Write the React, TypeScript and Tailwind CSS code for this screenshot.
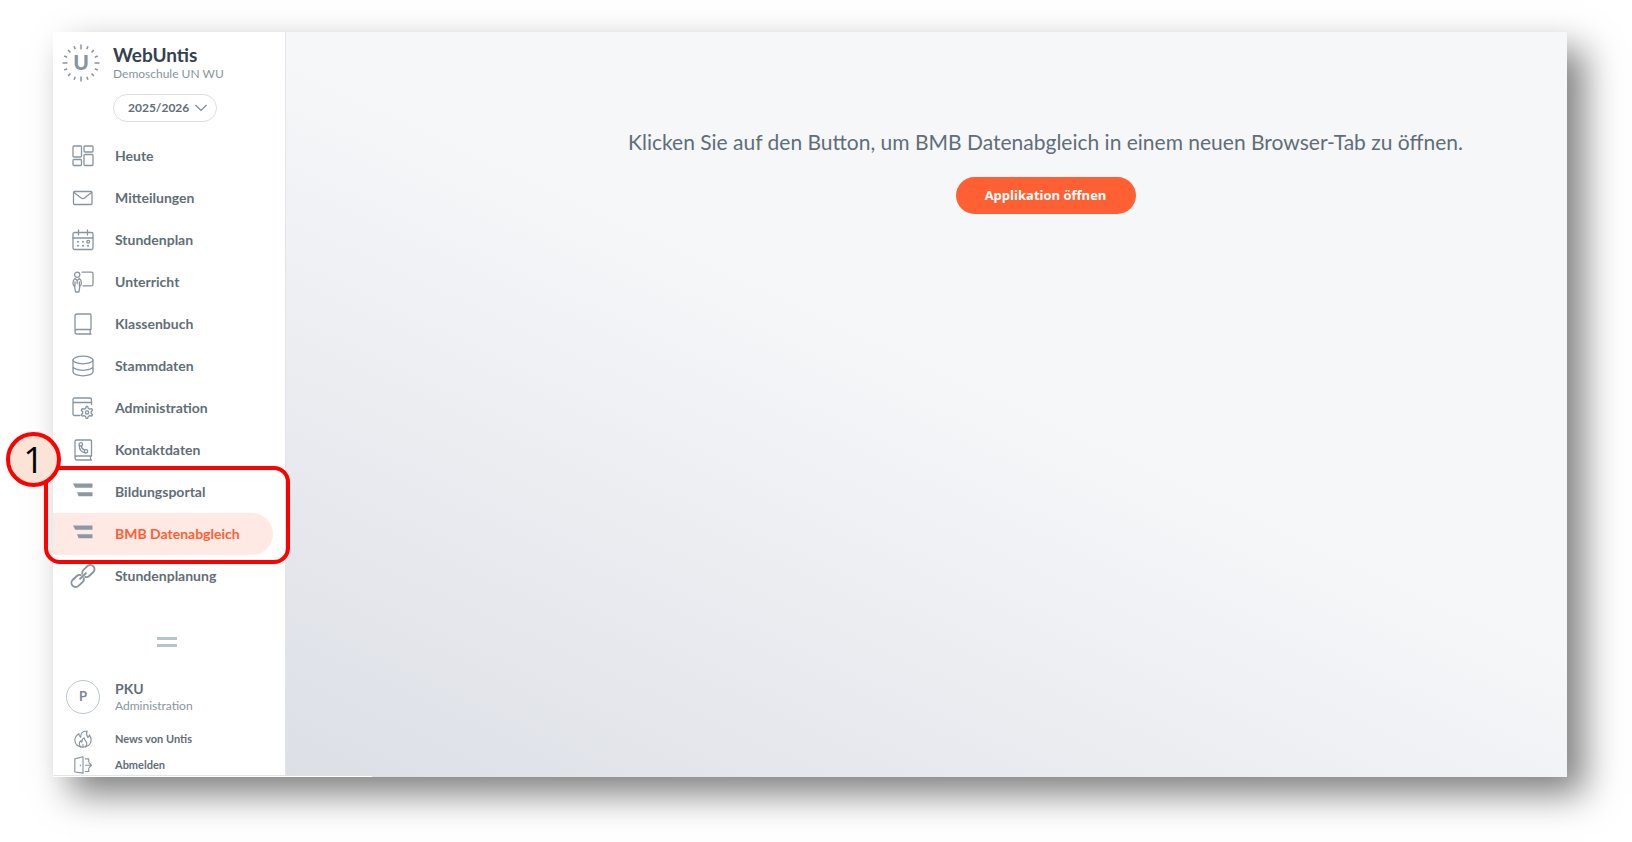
import type { ReactNode } from "react";

interface IconProps {
	children: ReactNode;
	size?: "md" | "sm";
}

function Icon({ children, size = "md" }: IconProps) {
	return (
		<svg
			viewBox="0 0 22 22"
			fill="none"
			stroke="#8795a0"
			strokeWidth={size === "sm" ? 1.4 : 1.3}
			strokeLinecap="round"
			strokeLinejoin="round"
			aria-hidden="true"
			className={`shrink-0 overflow-visible ${size === "sm" ? "size-[18px]" : "size-[22px]"}`}
		>
			{children}
		</svg>
	);
}

const portalIcon = (
	<g fill="#8b99a3" stroke="none">
		<path d="M1 2.500h19.500v4.300H3.200z" />
		<path d="M5 11.300h15.500v4H6.600z" />
	</g>
);

const icons = {
	today: (
		<>
			<rect x="1" y="1" width="8.5" height="11" rx="1" />
			<rect x="12" y="1" width="9" height="6" rx="1" />
			<rect x="1" y="14.5" width="8.5" height="6" rx="1" />
			<rect x="12" y="9.5" width="9" height="11" rx="1" />
		</>
	),
	messages: (
		<>
			<rect x="1.5" y="4.5" width="18.5" height="13" rx="1" />
			<path d="m2 5.500 6.800 5.300q2 1.500 4 0L19.500 5.500" />
		</>
	),
	timetable: (
		<>
			<rect x="1" y="3.500" width="20" height="17" rx="1.500" />
			<path d="M1 9h20M6.500 1v5M15.500 1v5" />
			<path strokeWidth="2" d="M6 12.800h.01M11 12.800h.01M6 16.800h.01M11 16.800h.01M16 16.800h.01" />
			<circle cx="16.200" cy="12.800" r="1.400" />
		</>
	),
	lessons: (
		<>
			<circle cx="5.200" cy="3.700" r="2.600" />
			<path d="M10 1.200h9.500q1.500 0 1.500 1.500v10.600q0 1.500-1.500 1.500H11" />
			<path d="M3 7.500q-2 1.200-2 4.500 0 2.500 1.600 3.500l.9 5.500h3.400l.9-5.500q1.600-1 1.600-3.500 0-3.300-2-4.500M3 7.500l2.200 2 2.200-2M5.200 9.500v3M3 11v4M7.400 11v4" />
		</>
	),
	classbook: (
		<path d="M19 16.500V2q0-1-1-1H5Q3 1 3 3v15.500Q3 21 5 21h14M19 16.500H5q-2 0-2 2M18.200 16.500V21" />
	),
	masterData: (
		<>
			<ellipse cx="11" cy="5" rx="10" ry="3.800" />
			<path d="M1 5v12c0 2.100 4.500 3.800 10 3.800s10-1.700 10-3.800V5M1 11.500c0 2.100 4.500 3.800 10 3.800s10-1.700 10-3.800" />
		</>
	),
	administration: (
		<>
			<path d="M8 18.500H2.500Q1 18.500 1 17V2.500Q1 1 2.500 1h15.500Q19.500 1 19.500 2.500v5M1 5.500h18.500" />
			<path d="m14.300 9.500 1.400 0 .6 1.900 1.300.8 2-.5.9 1.500-1.300 1.500v1.500l1.300 1.500-.9 1.500-2-.5-1.300.7-.6 1.900h-1.600l-.6-1.900-1.300-.7-2 .5-.9-1.500 1.300-1.500v-1.500l-1.300-1.500.9-1.500 2 .5 1.300-.8z" />
			<circle cx="15" cy="15.400" r="1.600" />
		</>
	),
	contacts: (
		<>
			<path d="M19.500 17V2.300Q19.500 1 18.200 1H4.500Q3 1 3 3v15.500Q3 21 5 21h14.500M19.500 17H5q-2 0-2 1.700M18.500 17v4" />
			<circle cx="8.800" cy="5.300" r="1.700" />
			<path d="M7.200 6.500c.2 4 2.500 6.800 6 7.300M9.500 7c0 1.800 1.500 3.500 3.200 3.900" />
			<circle cx="14" cy="12.300" r="1.700" />
		</>
	),
	planning: (
		<g transform="rotate(-43 11 11)" strokeWidth="1.900">
			<path d="M10 8.800A4 4 0 0 0 6.500 6.800H1a4.200 4.200 0 0 0 0 8.400h5.500A4 4 0 0 0 10 13.200" />
			<path d="M12 8.800A4 4 0 0 1 15.500 6.800H21a4.200 4.200 0 0 1 0 8.400h-5.500A4 4 0 0 1 12 13.200" />
			<path d="M7 11h8" />
		</g>
	),
	news: (
		<>
			<path d="M16 1.200C9 1 8 5.500 8.300 9 6.500 8 6 6.500 6 4.500 3 6.500 1 9.500 1 12.500c0 5 4.500 8.500 9.700 8.500 5.800 0 10.300-3.700 10.300-9.200 0-2.300-.8-4-2.300-5.800 0 1.500-.4 2.500-1.700 3.300-1.700-2.500-2.500-5-1-8.100z" />
			<path d="M8 20.500c-2.500-3-1.500-6 .5-7.500 0 1 .5 1.500 1.200 1.900-.3-2.400.8-4.400 2.800-5.400 0 3.500 3.500 4 3.200 7.500-.1 1.600-.8 2.700-1.700 3.500M11 20.500v-3" />
		</>
	),
	logout: (
		<path d="M1 3.500 11 1v20L1 19.500zM14 3.500h4V7M14 19h4v-3.500M14 11.300h7M18.500 8.500l2.800 2.800-2.800 2.800M7.800 11v.8" />
	),
};

const mainItems = [
	{ label: "Heute", icon: icons.today },
	{ label: "Mitteilungen", icon: icons.messages },
	{ label: "Stundenplan", icon: icons.timetable },
	{ label: "Unterricht", icon: icons.lessons },
	{ label: "Klassenbuch", icon: icons.classbook },
	{ label: "Stammdaten", icon: icons.masterData },
	{ label: "Administration", icon: icons.administration },
	{ label: "Kontaktdaten", icon: icons.contacts },
];

interface NavItemProps {
	label: string;
	icon: ReactNode;
	active?: boolean;
}

function NavItem({ label, icon, active = false }: NavItemProps) {
	return (
		<a
			href="#"
			aria-current={active ? "page" : undefined}
			className={`mr-3 flex h-[42px] items-center gap-[21px] rounded-r-full pl-[19px] text-sm font-bold ${
				active ? "bg-[#ffe9e4] text-[#ff6033]" : "text-[#5f6e78]"
			}`}
		>
			<Icon>{icon}</Icon>
			{label}
		</a>
	);
}

function Logo() {
	const rays = Array.from({ length: 16 }, (_, i) => i * 22.5);

	return (
		<svg viewBox="0 0 38 38" className="size-[38px] shrink-0" role="img" aria-label="Untis">
			{rays.map((angle) => (
				<path
					key={angle}
					d={angle % 90 === 0 ? "M19 .5v5" : "M19 .8v3.200"}
					stroke="#8795a0"
					strokeWidth="1.500"
					transform={`rotate(${angle} 19 19)`}
				/>
			))}
			<text x="19" y="26" textAnchor="middle" fontSize="21" fontWeight="900" fill="#8795a0">
				U
			</text>
		</svg>
	);
}

function Sidebar() {
	return (
		<aside className="mb-px flex w-[233px] shrink-0 flex-col border-r border-b border-[#e3e6e9] bg-white">
			<header className="flex items-start gap-[13px] pt-3 pl-[9px]">
				<Logo />
				<div>
					<h1 className="text-[19px] leading-[22px] font-bold text-[#33424d]">WebUntis</h1>
					<p className="text-xs leading-4 text-[#8795a0]">Demoschule UN WU</p>
					<div className="relative mt-3 w-[104px]">
						<select
							aria-label="Schuljahr"
							className="h-7 w-full appearance-none rounded-full border border-[#d9dfe3] bg-white pl-[14px] text-xs font-bold text-[#5f6e78]"
						>
							<option>2025/2026</option>
						</select>
						<svg
							viewBox="0 0 12 8"
							fill="none"
							stroke="#7b8a95"
							strokeWidth="1.200"
							aria-hidden="true"
							className="pointer-events-none absolute top-[10px] right-[10px] h-2 w-3"
						>
							<path d="m.5 1 5.500 5.500L11.500 1" />
						</svg>
					</div>
				</div>
			</header>

			<nav aria-label="Hauptmenü" className="mt-[13px]">
				{mainItems.map((item) => (
					<NavItem key={item.label} {...item} />
				))}
				<div className="relative">
					<NavItem label="Bildungsportal" icon={portalIcon} />
					<NavItem label="BMB Datenabgleich" icon={portalIcon} active />
					{/* Step marker around both entries */}
					<div className="pointer-events-none absolute -top-[5px] -right-[5px] -bottom-[9px] -left-[9px] z-10 rounded-2xl border-4 border-[#ff0000]" />
					<div className="absolute -top-[39px] -left-[47px] z-20 flex size-[55px] items-center justify-center rounded-full border-4 border-[#ff0000] bg-[#fbe3d6] font-['Open_Sans',sans-serif] text-4xl text-black">
						1
					</div>
				</div>
				<NavItem label="Stundenplanung" icon={icons.planning} />
			</nav>

			<div className="mt-10 ml-[104px] h-[10px] w-5 border-y-3 border-[#b8c4cc]" />

			<div className="mt-[33px] flex items-center gap-[15px] pl-[13px]">
				<div className="flex size-[34px] items-center justify-center rounded-full border border-[#bcc7ce] text-[13px] font-bold text-[#7b8a95]">
					P
				</div>
				<div>
					<p className="text-sm leading-[18px] font-bold text-[#5f6e78]">PKU</p>
					<p className="text-xs leading-4 text-[#8795a0]">Administration</p>
				</div>
			</div>
			<div className="mt-[15px] flex flex-col gap-[6px] text-[11px] font-bold text-[#5f6e78]">
				<a href="#" className="flex h-5 items-center gap-[23px] pl-[21px]">
					<Icon size="sm">{icons.news}</Icon>
					News von Untis
				</a>
				<a href="#" className="flex h-5 items-center gap-[23px] pl-[21px]">
					<Icon size="sm">{icons.logout}</Icon>
					Abmelden
				</a>
			</div>
		</aside>
	);
}

export default function App() {
	return (
		<div className="flex min-h-screen bg-white pt-8 pr-[65px] pb-[65px] pl-[53px] font-['Lato',sans-serif]">
			<div className="flex flex-1 bg-white shadow-[17px_17px_34px_0_rgba(0,0,0,0.5)]">
				<Sidebar />
				<main className="relative flex flex-1 flex-col items-center bg-[linear-gradient(25deg,#dcdfe6_0%,#f6f7f9_54%)] pt-[94px] pl-[238px]">
					<p className="text-[21px] leading-8 text-[#5f6e78]">
						Klicken Sie auf den Button, um BMB Datenabgleich in einem neuen Browser-Tab zu öffnen.
					</p>
					<button
						type="button"
						className="mt-[19px] h-[37px] w-[180px] rounded-full bg-[#ff6033] font-['Open_Sans',sans-serif] text-[13px] font-bold text-white"
					>
						Applikation öffnen
					</button>
					<div className="absolute bottom-0 left-0 h-px w-[86px] bg-white" />
				</main>
			</div>
		</div>
	);
}
